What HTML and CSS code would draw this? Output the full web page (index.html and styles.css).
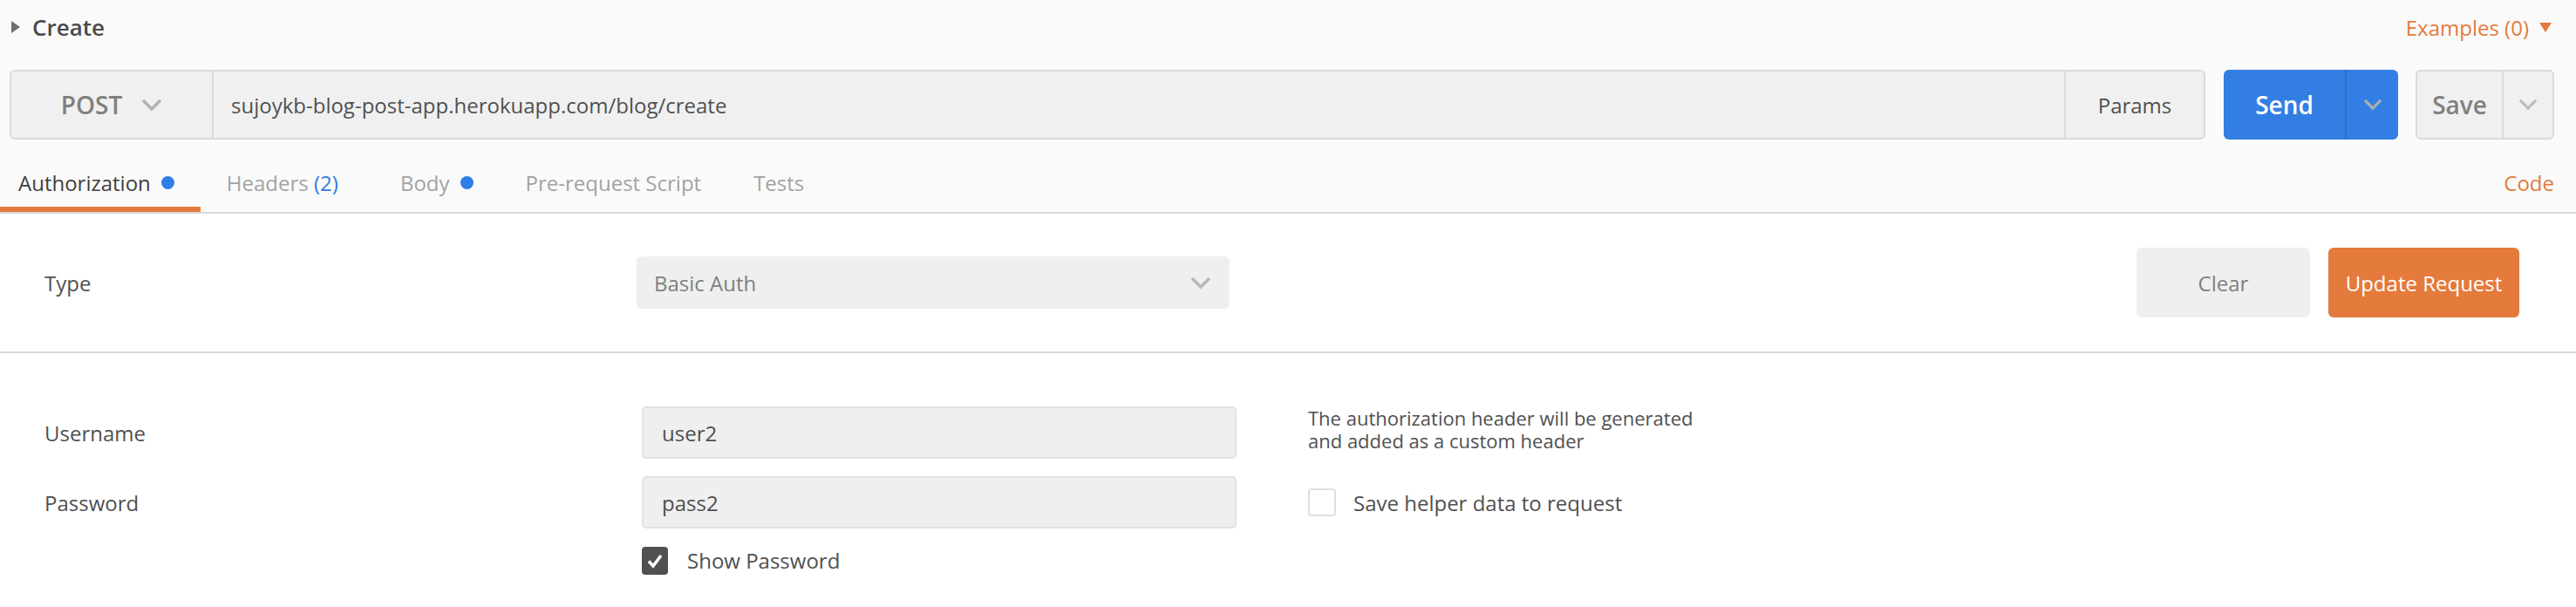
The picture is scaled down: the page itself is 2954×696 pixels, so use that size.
FILE: index.html
```html
<!DOCTYPE html>
<html>
<head>
<meta charset="utf-8">
<title>Create</title>
<link rel="stylesheet" href="styles.css">
</head>
<body>
<div class="top">
  <header class="req-head">
    <div class="req-title"><span class="caret"></span><span>Create</span></div>
    <div class="examples">Examples (0) <span class="tri"></span></div>
  </header>
  <div class="url-row">
    <div class="url-group">
      <div class="method">POST
        <svg class="chev" width="24" height="15" viewBox="0 0 24 15"><path d="M2 2 L12 12 L22 2" /></svg>
      </div>
      <div class="url">sujoykb-blog-post-app.herokuapp.com/blog/create</div>
      <div class="params">Params</div>
    </div>
    <div class="send">
      <span class="send-main">Send</span>
      <span class="send-drop"><svg class="chev" width="22" height="14" viewBox="0 0 24 15"><path d="M2 2 L12 12 L22 2" /></svg></span>
    </div>
    <div class="save">
      <span class="save-main">Save</span>
      <span class="save-drop"><svg class="chev" width="22" height="14" viewBox="0 0 24 15"><path d="M2 2 L12 12 L22 2" /></svg></span>
    </div>
  </div>
  <nav class="tabs">
    <div class="tab active">Authorization<span class="dot"></span></div>
    <div class="tab tab-headers">Headers <span class="count">(2)</span></div>
    <div class="tab">Body<span class="dot"></span></div>
    <div class="tab">Pre-request Script</div>
    <div class="tab">Tests</div>
    <div class="code">Code</div>
  </nav>
</div>

<section class="auth-type">
  <div class="type-label">Type</div>
  <div class="select">
    <span>Basic Auth</span>
    <svg class="chev" width="24" height="15" viewBox="0 0 24 15"><path d="M2 2 L12 12 L22 2" /></svg>
  </div>
  <div class="actions">
    <button class="btn btn-clear">Clear</button>
    <button class="btn btn-update">Update Request</button>
  </div>
</section>

<section class="fields">
  <div class="field-label">Username</div>
  <div class="input">user2</div>
  <div class="helper-text">The authorization header will be generated<br>and added as a custom header</div>

  <div class="field-label">Password</div>
  <div class="input">pass2</div>
  <label class="helper-check"><span class="box"></span>Save helper data to request</label>

  <div class="spacer"></div>
  <label class="show-pass"><span class="box checked"><svg width="30" height="32" viewBox="0 0 30 32"><path d="M8 16.5 L13 22 L22 10" /></svg></span>Show Password</label>
</section>
</body>
</html>
```

FILE: styles.css
```css
* { box-sizing: border-box; }

body {
  margin: 0;
  font-family: "Open Sans", "Liberation Sans", sans-serif;
  color: #505050;
  background: #ffffff;
}

.top {
  background: #fafafa;
  border-bottom: 2px solid #dadada;
}

.req-head {
  height: 62px;
  display: flex;
  align-items: center;
  justify-content: space-between;
  padding: 0 28px 0 13px;
}

.req-title {
  display: flex;
  align-items: center;
  gap: 14px;
  font-size: 26px;
  font-weight: 600;
  color: #4a4a4a;
}

.caret {
  width: 0;
  height: 0;
  border-left: 10px solid #707070;
  border-top: 7px solid transparent;
  border-bottom: 7px solid transparent;
}

.examples {
  display: flex;
  align-items: center;
  gap: 12px;
  font-size: 24px;
  color: #e47a3c;
}

.tri {
  width: 0;
  height: 0;
  border-top: 11px solid #e47a3c;
  border-left: 7.5px solid transparent;
  border-right: 7.5px solid transparent;
}

.url-row {
  margin-top: 18px;
  height: 80px;
  display: flex;
  padding: 0 25px 0 11px;
}

.url-group {
  flex: 1;
  display: flex;
  border: 2px solid #dadada;
  border-radius: 6px;
  background: #f0f0f0;
  font-size: 24px;
}

.chev path {
  fill: none;
  stroke: #b3b3b3;
  stroke-width: 3.5;
}

.method {
  width: 232px;
  border-right: 2px solid #dadada;
  display: flex;
  align-items: center;
  justify-content: center;
  gap: 22px;
  font-size: 28px;
  font-weight: 600;
  color: #808080;
}

.url {
  flex: 1;
  display: flex;
  align-items: center;
  padding-left: 20px;
  color: #505050;
}

.params {
  width: 160px;
  border-left: 2px solid #dadada;
  display: flex;
  align-items: center;
  justify-content: center;
  font-size: 24px;
  color: #505050;
}

.send {
  margin-left: 21px;
  width: 200px;
  display: flex;
  background: #337ee3;
  border-radius: 6px;
  color: #ffffff;
  font-size: 28px;
  font-weight: 600;
}

.send-main, .save-main {
  display: flex;
  align-items: center;
  justify-content: center;
}

.send-main { width: 139px; }

.send-drop, .save-drop {
  flex: 1;
  display: flex;
  align-items: center;
  justify-content: center;
}

.send-drop { border-left: 2px solid #2a6cc8; }
.send-drop .chev path { stroke: #a9adb3; }

.save {
  margin-left: 20px;
  width: 159px;
  display: flex;
  background: #f0f0f0;
  border: 2px solid #dadada;
  border-radius: 6px;
  color: #808080;
  font-size: 28px;
  font-weight: 600;
}

.save-main { width: 97px; }
.save-drop { border-left: 2px solid #dadada; }
.save-drop .chev path { stroke: #bdbdbd; }

.tabs {
  height: 83px;
  display: flex;
  align-items: flex-end;
  padding-right: 25px;
  font-size: 24px;
}

.tab {
  height: 68px;
  display: flex;
  align-items: center;
  padding: 0 30px;
  color: #a3a3a3;
  white-space: pre;
}

.tab.active {
  padding-left: 21px;
  color: #404040;
  box-shadow: inset 0 -6px 0 #e47a3c;
}

.tab-headers { padding-right: 41px; }

.dot {
  width: 15px;
  height: 15px;
  margin-left: 12px;
  border-radius: 50%;
  background: #2f7de6;
}

.count { color: #2f7de6; }

.code {
  margin-left: auto;
  height: 68px;
  display: flex;
  align-items: center;
  color: #e47a3c;
}

.auth-type {
  height: 160px;
  display: flex;
  align-items: center;
  padding: 0 65px 0 51px;
  border-bottom: 2px solid #dadada;
  font-size: 24px;
}

.type-label { width: 679px; color: #505050; }

.select {
  width: 680px;
  height: 60px;
  display: flex;
  align-items: center;
  justify-content: space-between;
  padding: 0 21px 0 20px;
  background: #efefef;
  border-radius: 6px;
  color: #808080;
}

.select .chev path { stroke: #b8b8b8; }

.actions {
  margin-left: auto;
  display: flex;
  gap: 21px;
}

.btn {
  height: 80px;
  border: none;
  border-radius: 6px;
  font-family: inherit;
  font-size: 24px;
}

.btn-clear {
  width: 199px;
  background: #efefef;
  color: #808080;
}

.btn-update {
  width: 219px;
  background: #e47a3c;
  color: #ffffff;
}

.fields {
  display: grid;
  grid-template-columns: 685px 682px 1fr;
  row-gap: 20px;
  padding: 61px 0 0 51px;
  font-size: 24px;
}

.field-label {
  align-self: center;
  color: #505050;
}

.input {
  height: 60px;
  display: flex;
  align-items: center;
  padding: 0 21px;
  background: #efefef;
  border: 2px solid #e2e2e2;
  border-radius: 5px;
  color: #505050;
}

.helper-text {
  padding-left: 82px;
  font-size: 22px;
  line-height: 26px;
  color: #505050;
}

.helper-check {
  align-self: center;
  margin-left: 82px;
  display: flex;
  align-items: center;
  gap: 20px;
  color: #505050;
}

.box {
  width: 32px;
  height: 32px;
  border: 2px solid #e0e0e0;
  border-radius: 4px;
  background: #ffffff;
}

.show-pass {
  display: flex;
  align-items: center;
  gap: 22px;
  color: #505050;
}

.box.checked {
  width: 30px;
  border: none;
  background: #505050;
  display: flex;
}

.box.checked path {
  fill: none;
  stroke: #ffffff;
  stroke-width: 3.5;
}
```
